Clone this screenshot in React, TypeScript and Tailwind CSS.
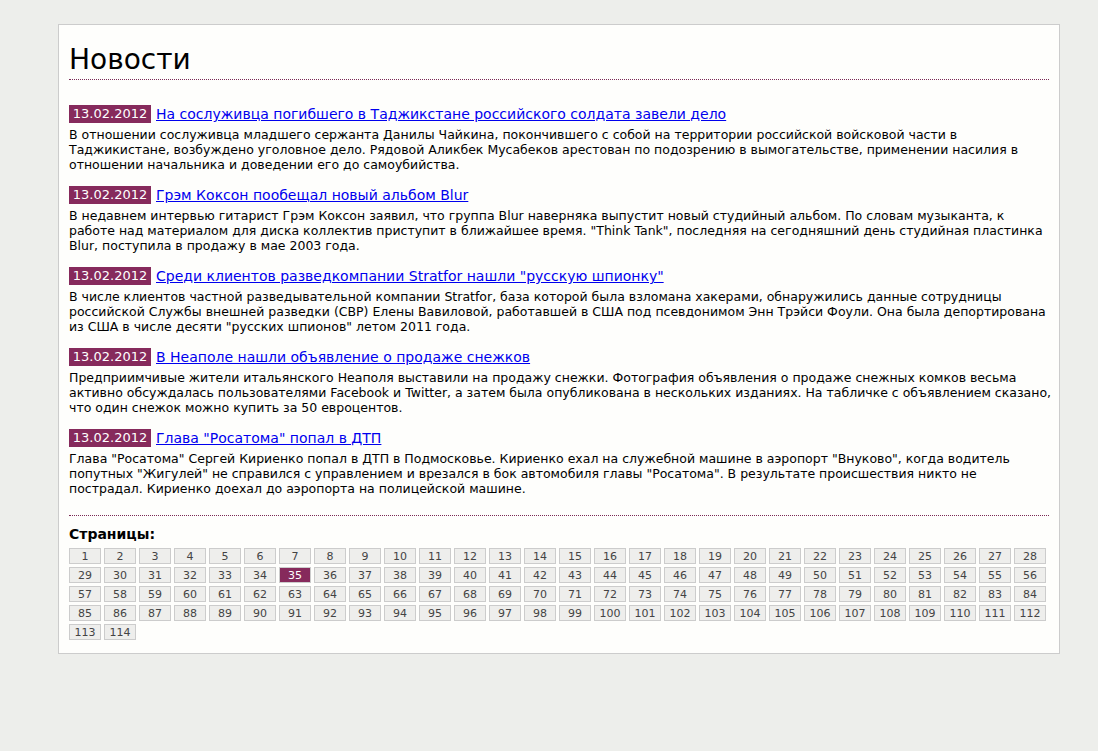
import React from "react";

const news = [
  {
    title: "На сослуживца погибшего в Таджикстане российского солдата завели дело",
    text: "В отношении сослуживца младшего сержанта Данилы Чайкина, покончившего с собой на территории российской войсковой части в Таджикистане, возбуждено уголовное дело. Рядовой Аликбек Мусабеков арестован по подозрению в вымогательстве, применении насилия в отношении начальника и доведении его до самоубийства.",
  },
  {
    title: "Грэм Коксон пообещал новый альбом Blur",
    text: "В недавнем интервью гитарист Грэм Коксон заявил, что группа Blur наверняка выпустит новый студийный альбом. По словам музыканта, к работе над материалом для диска коллектив приступит в ближайшее время. \"Think Tank\", последняя на сегодняшний день студийная пластинка Blur, поступила в продажу в мае 2003 года.",
  },
  {
    title: "Среди клиентов разведкомпании Stratfor нашли \"русскую шпионку\"",
    text: "В числе клиентов частной разведывательной компании Stratfor, база которой была взломана хакерами, обнаружились данные сотрудницы российской Службы внешней разведки (СВР) Елены Вавиловой, работавшей в США под псевдонимом Энн Трэйси Фоули. Она была депортирована из США в числе десяти \"русских шпионов\" летом 2011 года.",
  },
  {
    title: "В Неаполе нашли объявление о продаже снежков",
    text: "Предприимчивые жители итальянского Неаполя выставили на продажу снежки. Фотография объявления о продаже снежных комков весьма активно обсуждалась пользователями Facebook и Twitter, а затем была опубликована в нескольких изданиях. На табличке с объявлением сказано, что один снежок можно купить за 50 евроцентов.",
  },
  {
    title: "Глава \"Росатома\" попал в ДТП",
    text: "Глава \"Росатома\" Сергей Кириенко попал в ДТП в Подмосковье. Кириенко ехал на служебной машине в аэропорт \"Внуково\", когда водитель попутных \"Жигулей\" не справился с управлением и врезался в бок автомобиля главы \"Росатома\". В результате происшествия никто не пострадал. Кириенко доехал до аэропорта на полицейской машине.",
  },
];

const pages = Array.from({ length: 114 }, (_, i) => i + 1);

export default function App() {
  return (
    <div className="min-h-[751px] bg-[#edeeeb] pt-6 px-[58px] pb-[97px] font-['DejaVu_Sans',sans-serif] text-black">
      <div className="w-[1002px] bg-[#fefefc] border border-[#cccccc] px-[10px] pt-[17px] pb-[13px]">
        <h1 className="text-[28px] leading-[36px] border-b border-dotted border-[#7a2a55] pb-[1px]">
          Новости
        </h1>

        <div className="mt-[25px] flex flex-col gap-[14px]">
          {news.map((n) => (
            <div key={n.title}>
              <div className="flex items-center gap-[5px] h-[18px]">
                <span className="w-[82px] text-center bg-[#862a5c] text-white text-[13px] leading-[18px]">
                  13.02.2012
                </span>
                <a href="#" className="text-[#0000ee] underline text-[14px] leading-[18px]">
                  {n.title}
                </a>
              </div>
              <p className="text-[12.5px] leading-[15px] mt-[4px] mr-[-4px]">{n.text}</p>
            </div>
          ))}
        </div>

        <div className="mt-[19px] border-t border-dotted border-[#7a2a55] pt-[9px]">
          <h2 className="text-[14px] font-bold leading-[18px]">Страницы:</h2>
          <div className="mt-[5px] flex flex-wrap gap-[3px]">
            {pages.map((p) => (
              <span
                key={p}
                className={
                  p === 35
                    ? "w-[32px] h-[16px] flex items-center justify-center text-[11px] leading-none border border-[#cccccc] bg-[#862a5c] text-white"
                    : "w-[32px] h-[16px] flex items-center justify-center text-[11px] leading-none border border-[#cccccc] bg-[#eeeeec] text-[#444444]"
                }
              >
                {p}
              </span>
            ))}
          </div>
        </div>
      </div>
    </div>
  );
}
